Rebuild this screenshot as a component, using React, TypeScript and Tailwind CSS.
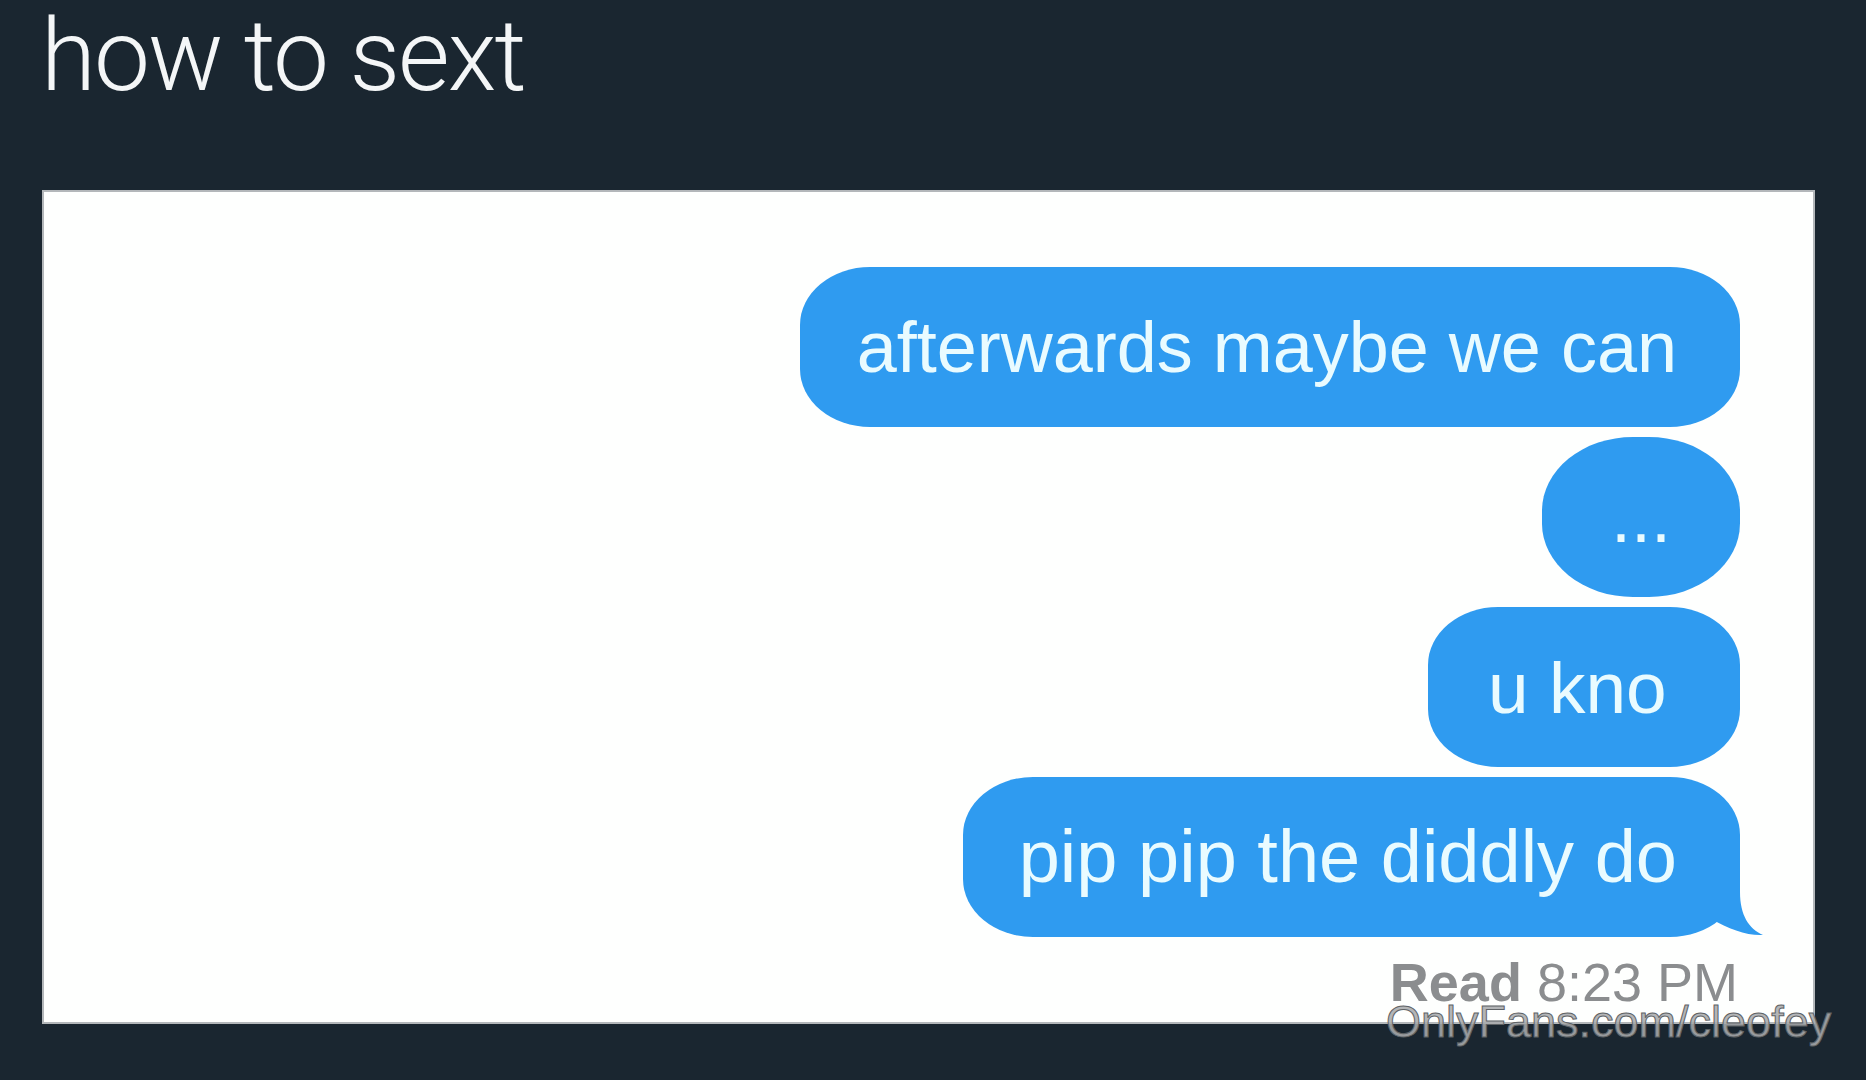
import React from "react";

const bubbleBase =
  "relative flex items-center h-[160px] bg-[#2f9bf0] text-[#e9fbff] leading-none whitespace-nowrap";

export default function App() {
  return (
    <div className="w-[1866px] h-[1080px] bg-[#1a2630] flex flex-col overflow-hidden relative">
      <div className="pl-[41px] pt-[1px] h-[190px] text-[100px] leading-[1.1] font-light text-[#f4f6f7] tracking-[-2px] [font-family:Roboto,'Liberation_Sans',sans-serif]">
        how to sext
      </div>
      <div className="ml-[42px] w-[1773px] h-[834px] bg-[#fefffe] border-2 border-[#b3b7ba] flex flex-col items-end pr-[73px] pt-[75px] gap-[10px] [font-family:'Liberation_Sans',Arial,sans-serif]">
        <div className={bubbleBase + " text-[72px] pl-[57px] pr-[63px] rounded-[70px/58px]"}>
          afterwards maybe we can
        </div>
        <div className={bubbleBase + " text-[72px] w-[198px] justify-center rounded-[46%] text-[#dff6ff]"}>
          ...
        </div>
        <div className={bubbleBase + " text-[73px] w-[312px] pl-[60px] rounded-[70px/58px]"}>
          u kno
        </div>
        <div className={bubbleBase + " text-[74px] pl-[56px] pr-[63px] rounded-[70px/58px]"}>
          pip pip the diddly do
          <svg
            className="absolute right-[-30px] bottom-0"
            width="100"
            height="100"
            viewBox="-70 -100 100 100"
          >
            <path
              d="M -60 -100 H 0 V -45 C 0 -22, 9 -8, 23 -2 C 8 -1, -12 -8, -28 -18 L -60 -18 Z"
              fill="#2f9bf0"
            />
          </svg>
        </div>
        <div className="mt-[8px] text-[54px] leading-none text-[#8b8d8f] whitespace-nowrap pr-[2px]">
          <span className="font-semibold">Read</span> 8:23 PM
        </div>
      </div>
      <div className="absolute left-[1386px] top-[999px] text-[45px] leading-none text-[#a9abad]/90 whitespace-nowrap [font-family:'Liberation_Sans',Arial,sans-serif] [-webkit-text-stroke:1px_#5f6366]">
        OnlyFans.com/cleofey
      </div>
    </div>
  );
}
